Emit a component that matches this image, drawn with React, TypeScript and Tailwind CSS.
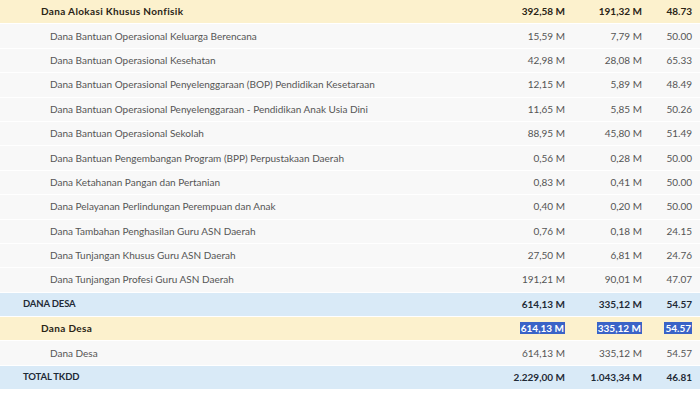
import React from 'react';

type Kind = 'group' | 'sub' | 'item';

interface Row {
  name: string;
  pagu: string;
  real: string;
  pct: string;
  kind: Kind;
  selected?: boolean;
}

const ROWS: Row[] = [
  { name: 'Dana Alokasi Khusus Nonfisik', pagu: '392,58 M', real: '191,32 M', pct: '48.73', kind: 'sub' },
  { name: 'Dana Bantuan Operasional Keluarga Berencana', pagu: '15,59 M', real: '7,79 M', pct: '50.00', kind: 'item' },
  { name: 'Dana Bantuan Operasional Kesehatan', pagu: '42,98 M', real: '28,08 M', pct: '65.33', kind: 'item' },
  { name: 'Dana Bantuan Operasional Penyelenggaraan (BOP) Pendidikan Kesetaraan', pagu: '12,15 M', real: '5,89 M', pct: '48.49', kind: 'item' },
  { name: 'Dana Bantuan Operasional Penyelenggaraan - Pendidikan Anak Usia Dini', pagu: '11,65 M', real: '5,85 M', pct: '50.26', kind: 'item' },
  { name: 'Dana Bantuan Operasional Sekolah', pagu: '88,95 M', real: '45,80 M', pct: '51.49', kind: 'item' },
  { name: 'Dana Bantuan Pengembangan Program (BPP) Perpustakaan Daerah', pagu: '0,56 M', real: '0,28 M', pct: '50.00', kind: 'item' },
  { name: 'Dana Ketahanan Pangan dan Pertanian', pagu: '0,83 M', real: '0,41 M', pct: '50.00', kind: 'item' },
  { name: 'Dana Pelayanan Perlindungan Perempuan dan Anak', pagu: '0,40 M', real: '0,20 M', pct: '50.00', kind: 'item' },
  { name: 'Dana Tambahan Penghasilan Guru ASN Daerah', pagu: '0,76 M', real: '0,18 M', pct: '24.15', kind: 'item' },
  { name: 'Dana Tunjangan Khusus Guru ASN Daerah', pagu: '27,50 M', real: '6,81 M', pct: '24.76', kind: 'item' },
  { name: 'Dana Tunjangan Profesi Guru ASN Daerah', pagu: '191,21 M', real: '90,01 M', pct: '47.07', kind: 'item' },
  { name: 'DANA DESA', pagu: '614,13 M', real: '335,12 M', pct: '54.57', kind: 'group' },
  { name: 'Dana Desa', pagu: '614,13 M', real: '335,12 M', pct: '54.57', kind: 'sub', selected: true },
  { name: 'Dana Desa', pagu: '614,13 M', real: '335,12 M', pct: '54.57', kind: 'item' },
  { name: 'TOTAL TKDD', pagu: '2.229,00 M', real: '1.043,34 M', pct: '46.81', kind: 'group' },
];

// background, text colour and indent for each level of the tree
const ROW_STYLE: Record<Kind, { bg: string; text: string; name: string }> = {
  group: { bg: 'bg-[#d9eaf7]', text: 'font-bold text-[#1f2a36]', name: 'pl-[23px] text-[9.5px] tracking-[-0.15px]' },
  sub: { bg: 'bg-[#fcf1cd]', text: 'font-bold text-[#2a2416]', name: 'pl-[41px] tracking-[0.35px]' },
  item: { bg: 'bg-[#f8f8f8]', text: 'text-[#555]', name: 'pl-[50px]' },
};

function Cell({ value, selected, className }: { value: string; selected?: boolean; className: string }) {
  return (
    <div className={`text-right ${className}`}>
      {selected ? <span className="bg-[#3a63c7] text-white px-[1px]">{value}</span> : value}
    </div>
  );
}

export default function App() {
  return (
    <div
      className="w-[700px] h-[393px] bg-white overflow-hidden text-[10px]"
      style={{ fontFamily: 'Lato, "Noto Sans", sans-serif' }}
    >
      {ROWS.map((r, i) => {
        const s = ROW_STYLE[r.kind];
        return (
          <div
            key={i}
            className={`flex items-center h-[24.4px] border-b border-white ${s.bg} ${s.text}`}
          >
            <div className={`flex-1 ${s.name}`}>{r.name}</div>
            <Cell value={r.pagu} selected={r.selected} className="w-[100px]" />
            <Cell value={r.real} selected={r.selected} className="w-[77px]" />
            <Cell value={r.pct} selected={r.selected} className="w-[50px] mr-[8px]" />
          </div>
        );
      })}
    </div>
  );
}
